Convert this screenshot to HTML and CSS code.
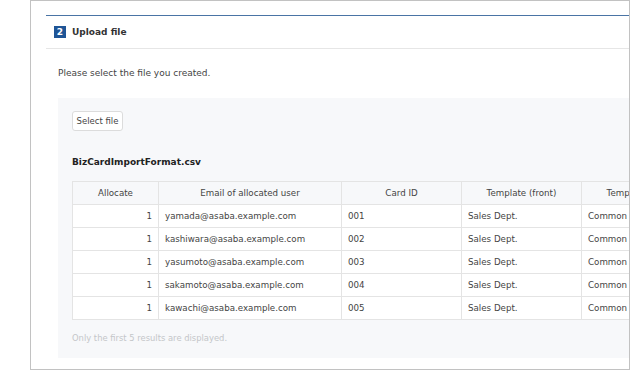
FILE: index.html
```html
<!DOCTYPE html>
<html lang="en">
<head>
  <meta charset="UTF-8" />
  <title>Upload file</title>
  <link rel="stylesheet" href="styles.css">
</head>
<body>
  <div class="frame">
    <div class="section">
      <div class="section-head">
        <span class="step">2</span>
        <h3>Upload file</h3>
      </div>
      <div class="section-body">
        <p class="lead">Please select the file you created.</p>
        <div class="panel">
          <button class="select-btn">Select file</button>
          <div class="file-name">BizCardImportFormat.csv</div>
          <table class="preview">
            <thead>
              <tr>
                <th class="c-alloc">Allocate</th>
                <th class="c-email">Email of allocated user</th>
                <th class="c-id">Card ID</th>
                <th class="c-front">Template (front)</th>
                <th class="c-back">Template (back)</th>
              </tr>
            </thead>
            <tbody>
              <tr><td class="num">1</td><td>yamada@asaba.example.com</td><td>001</td><td>Sales Dept.</td><td>Common</td></tr>
              <tr><td class="num">1</td><td>kashiwara@asaba.example.com</td><td>002</td><td>Sales Dept.</td><td>Common</td></tr>
              <tr><td class="num">1</td><td>yasumoto@asaba.example.com</td><td>003</td><td>Sales Dept.</td><td>Common</td></tr>
              <tr><td class="num">1</td><td>sakamoto@asaba.example.com</td><td>004</td><td>Sales Dept.</td><td>Common</td></tr>
              <tr><td class="num">1</td><td>kawachi@asaba.example.com</td><td>005</td><td>Sales Dept.</td><td>Common</td></tr>
            </tbody>
          </table>
          <p class="note">Only the first 5 results are displayed.</p>
        </div>
      </div>
    </div>
  </div>
</body>
</html>
```

FILE: styles.css
```css
* {
  margin: 0;
  padding: 0;
  box-sizing: border-box;
}

body {
  font-family: "DejaVu Sans", Verdana, sans-serif;
  font-size: 9px;
  color: #333;
  background: #fff;
}

.frame {
  margin-left: 30px;
  width: 600px;
  height: 370px;
  border: 1px solid #c2c2c2;
  padding: 14px 0 0 15px;
  overflow: hidden;
}

.section {
  border-top: 1px solid #4a74a5;
  width: 720px;
}

.section-head {
  display: flex;
  align-items: center;
  height: 33px;
  padding-left: 8px;
  border-bottom: 1px solid #e6e6e6;
}

.step {
  display: inline-block;
  width: 12px;
  height: 12px;
  background: #1f5596;
  color: #fff;
  font-weight: bold;
  font-size: 9px;
  line-height: 12px;
  text-align: center;
  margin-right: 6px;
}

.section-head h3 {
  font-size: 9px;
  font-weight: bold;
  color: #333;
}

.section-body {
  padding-left: 12px;
}

.lead {
  font-size: 9px;
  color: #444;
  padding-top: 19px;
  height: 49px;
}

.panel {
  background: #f7f8fa;
  padding: 13px 14px 0;
  height: 260px;
}

.select-btn {
  font-family: inherit;
  font-size: 8.5px;
  color: #444;
  background: #fff;
  border: 1px solid #dcdcdc;
  border-radius: 3px;
  width: 51px;
  height: 20px;
}

.file-name {
  font-size: 9px;
  font-weight: bold;
  color: #222;
  margin-top: 26px;
  height: 24px;
}

.preview {
  border-collapse: collapse;
  table-layout: fixed;
  width: 629px;
}

.preview th,
.preview td {
  border: 1px solid #e4e4e4;
  height: 23px;
  padding: 0 6px;
  font-weight: normal;
  font-size: 8.7px;
  white-space: nowrap;
  overflow: hidden;
}

.preview th {
  background: #f7f8fa;
  text-align: center;
  color: #444;
}

.preview td {
  background: #fff;
  color: #444;
}

.preview td.num {
  text-align: right;
}

.c-alloc { width: 86px; }
.c-email { width: 183px; }
.c-id { width: 120px; }
.c-front { width: 120px; }
.c-back { width: 120px; }

.note {
  color: #c4c6c9;
  font-size: 8.4px;
  margin-top: 13px;
}
```
